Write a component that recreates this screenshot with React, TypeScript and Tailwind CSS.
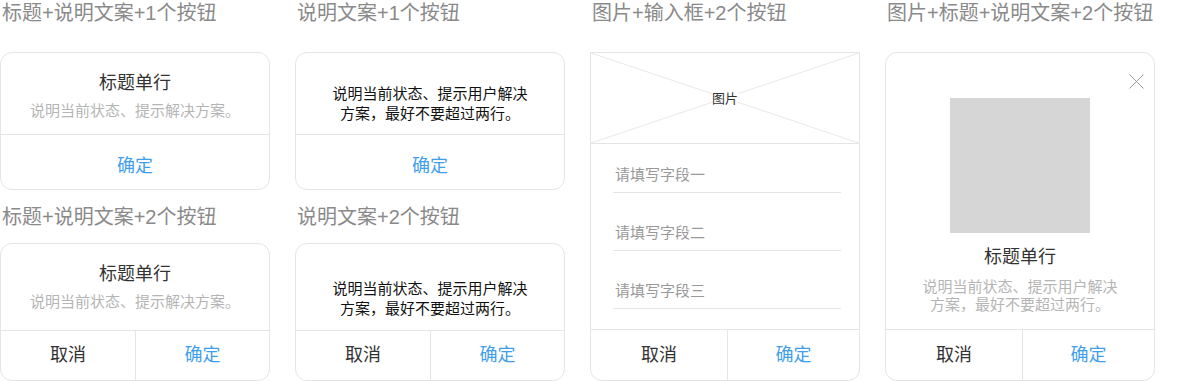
import React from 'react';

const Heading: React.FC<{ text: string; className?: string }> = ({ text, className = '' }) => (
  <div className={`h-[26px] pl-[2px] text-[20px] leading-[26px] text-[#8a8a8a] whitespace-nowrap ${className}`}>
    {text}
  </div>
);

const Confirm: React.FC = () => <span className="text-[18px] text-[#3f9fec]">确定</span>;

// footer with a single 确定
const FooterOne: React.FC = () => (
  <div className="h-[55px] border-t border-[#e5e5e5] pt-[8px] flex items-center justify-center">
    <Confirm />
  </div>
);

// footer with 取消 | 确定
const FooterTwo: React.FC<{ leftClass: string; heightClass: string }> = ({ leftClass, heightClass }) => (
  <div className={`flex border-t border-[#e5e5e5] ${heightClass}`}>
    <div className={`${leftClass} border-r border-[#e5e5e5] flex items-center justify-center text-[18px] text-[#333]`}>
      取消
    </div>
    <div className="flex-1 flex items-center justify-center">
      <Confirm />
    </div>
  </div>
);

const Card: React.FC<{ className?: string; children: React.ReactNode }> = ({ className = '', children }) => (
  <div className={`w-[270px] border border-[#e5e5e5] bg-white overflow-hidden ${className}`}>{children}</div>
);

const TitleBlock: React.FC<{ pad: string }> = ({ pad }) => (
  <div className={`text-center ${pad}`}>
    <div className="text-[18px] leading-[24px] text-[#333]">标题单行</div>
    <div className="mt-[6px] text-[15px] leading-[20px] text-[#b5b5b5] whitespace-nowrap">说明当前状态、提示解决方案。</div>
  </div>
);

const TextBlock: React.FC<{ pad: string }> = ({ pad }) => (
  <div className={`text-center text-[15px] leading-[20px] text-[#111] whitespace-nowrap ${pad}`}>
    说明当前状态、提示用户解决
    <br />
    方案，最好不要超过两行。
  </div>
);

const Field: React.FC<{ label: string; mt: string }> = ({ label, mt }) => (
  <div className={`ml-[22px] mr-[18px] border-b border-[#e5e5e5] pb-[7px] pl-[2px] ${mt}`}>
    <div className="text-[15px] leading-[20px] text-[#999]">{label}</div>
  </div>
);

const App: React.FC = () => {
  return (
    <div className="w-[1181px] h-[381px] bg-white flex gap-[25px] overflow-hidden font-['Liberation_Sans','Noto_Sans_CJK_SC',sans-serif]">
      {/* column 1 */}
      <div className="w-[270px] flex flex-col">
        <Heading text="标题+说明文案+1个按钮" />
        <Card className="mt-[26px] rounded-[12px]">
          <TitleBlock pad="pt-[18px] pb-[13px]" />
          <FooterOne />
        </Card>
        <Heading text="标题+说明文案+2个按钮" className="mt-[14px]" />
        <Card className="mt-[13px] rounded-[12px]">
          <TitleBlock pad="pt-[18px] pb-[18px]" />
          <FooterTwo leftClass="w-[135px]" heightClass="h-[50px]" />
        </Card>
      </div>

      {/* column 2 */}
      <div className="w-[270px] flex flex-col">
        <Heading text="说明文案+1个按钮" />
        <Card className="mt-[26px] rounded-[12px]">
          <TextBlock pad="pt-[31px] pb-[10px]" />
          <FooterOne />
        </Card>
        <Heading text="说明文案+2个按钮" className="mt-[14px]" />
        <Card className="mt-[13px] rounded-[12px]">
          <TextBlock pad="pt-[35px] pb-[11px]" />
          <FooterTwo leftClass="w-[135px]" heightClass="h-[50px]" />
        </Card>
      </div>

      {/* column 3 */}
      <div className="w-[270px] flex flex-col">
        <Heading text="图片+输入框+2个按钮" />
        <Card className="mt-[26px] rounded-b-[12px] h-[329px] flex flex-col">
          <div className="relative h-[91px] border-b border-[#e5e5e5] flex items-center justify-center">
            <svg className="absolute inset-0 w-full h-[90px]" viewBox="0 0 268 90" preserveAspectRatio="none">
              <line x1="0" y1="0" x2="268" y2="90" stroke="#e8e8e8" strokeWidth="1" />
              <line x1="268" y1="0" x2="0" y2="90" stroke="#e8e8e8" strokeWidth="1" />
            </svg>
            <span className="relative bg-white text-[13px] leading-[15px] text-[#333]">图片</span>
          </div>
          <Field label="请填写字段一" mt="mt-[21px]" />
          <Field label="请填写字段二" mt="mt-[30px]" />
          <Field label="请填写字段三" mt="mt-[30px]" />
          <div className="flex-1" />
          <FooterTwo leftClass="w-[137px]" heightClass="h-[51px]" />
        </Card>
      </div>

      {/* column 4 */}
      <div className="w-[270px] flex flex-col">
        <Heading text="图片+标题+说明文案+2个按钮" />
        <Card className="relative mt-[26px] rounded-[12px] h-[329px] flex flex-col">
          <svg className="absolute top-[21px] right-[10px] w-[15px] h-[15px]" viewBox="0 0 15 15">
            <path d="M0.5 0.5 L14.5 14.5 M14.5 0.5 L0.5 14.5" stroke="#9a9a9a" strokeWidth="1" fill="none" />
          </svg>
          <div className="pt-[45px] flex flex-col items-center">
            <div className="w-[140px] h-[135px] bg-[#d6d6d6]" />
            <div className="mt-[12px] text-[18px] leading-[24px] text-[#333]">标题单行</div>
            <div className="mt-[9px] text-center text-[15px] leading-[18px] text-[#b5b5b5] whitespace-nowrap">
              说明当前状态、提示用户解决
              <br />
              方案，最好不要超过两行。
            </div>
          </div>
          <div className="flex-1" />
          <FooterTwo leftClass="w-[137px]" heightClass="h-[51px]" />
        </Card>
      </div>
    </div>
  );
};

export default App;
